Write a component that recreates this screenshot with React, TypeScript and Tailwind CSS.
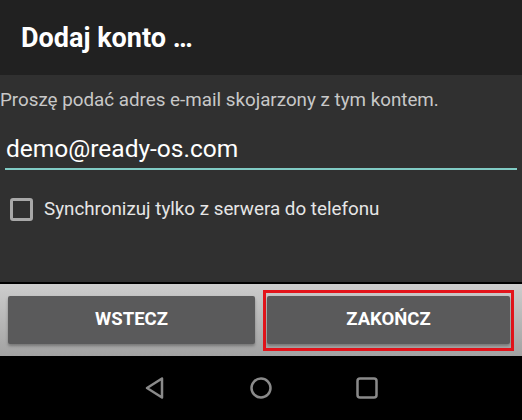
import React from "react";

export default function App() {
  return (
    <div className="flex h-[420px] w-[522px] flex-col bg-black font-['Roboto',sans-serif]">
      {/* title bar */}
      <div className="flex h-[75px] items-center bg-[#212121] pb-[2px] pl-[21px] pt-[4px]">
        <h1 className="text-[27px] font-bold text-white">Dodaj konto …</h1>
      </div>

      {/* content */}
      <div className="flex h-[207px] flex-col bg-[#303030]">
        <p className="mt-[13px] text-[18.8px] leading-[24px] text-[#c8c8c8]">
          Proszę podać adres e-mail skojarzony z tym kontem.
        </p>
        <div className="mx-[5px] mt-[22px] border-b-2 border-[#80cbc4] pb-[4px]">
          <span className="pl-[1px] text-[24.5px] leading-[30px] text-white">demo@ready-os.com</span>
        </div>
        <label className="mt-[27px] flex items-center gap-[11px] pl-[10px]">
          <span className="h-[23px] w-[23px] rounded-[3px] border-[3px] border-[#a8a8a8]" />
          <span className="text-[18.8px] leading-[24px] text-[#e6e6e6]">
            Synchronizuj tylko z serwera do telefonu
          </span>
        </label>
      </div>

      {/* button bar */}
      <div className="flex h-[74px] items-center gap-[8px] border-t-2 border-black bg-gradient-to-b from-[#cdcdcd] to-[#a2a2a2] px-[8px]">
        <button className="h-[48px] w-[247px] rounded-[2px] bg-[#5a5a5b] text-[18.5px] font-bold text-white shadow-[0_2px_3px_rgba(0,0,0,0.3)]">
          WSTECZ
        </button>
        <div className="flex h-[61px] flex-1 items-center justify-center border-[3px] border-[#e3141b] px-[1px]">
          <button className="h-[48px] w-full rounded-[2px] bg-[#5a5a5b] text-[18.5px] font-bold text-white shadow-[0_2px_3px_rgba(0,0,0,0.3)]">
            ZAKOŃCZ
          </button>
        </div>
      </div>

      {/* navigation bar */}
      <div className="flex flex-1 items-center justify-center gap-[82px] bg-black">
        <svg width="24" height="24" viewBox="0 0 24 24" fill="none" stroke="#8a8a8a" strokeWidth="2.5" strokeLinejoin="round">
          <path d="M19 2.5 L4 12 L19 21.5 Z" />
        </svg>
        <svg width="24" height="24" viewBox="0 0 24 24" fill="none" stroke="#8a8a8a" strokeWidth="2.5">
          <circle cx="12" cy="12" r="9.5" />
        </svg>
        <svg width="24" height="24" viewBox="0 0 24 24" fill="none" stroke="#8a8a8a" strokeWidth="2.5">
          <rect x="2.5" y="2.5" width="19" height="19" rx="2.5" />
        </svg>
      </div>
    </div>
  );
}
